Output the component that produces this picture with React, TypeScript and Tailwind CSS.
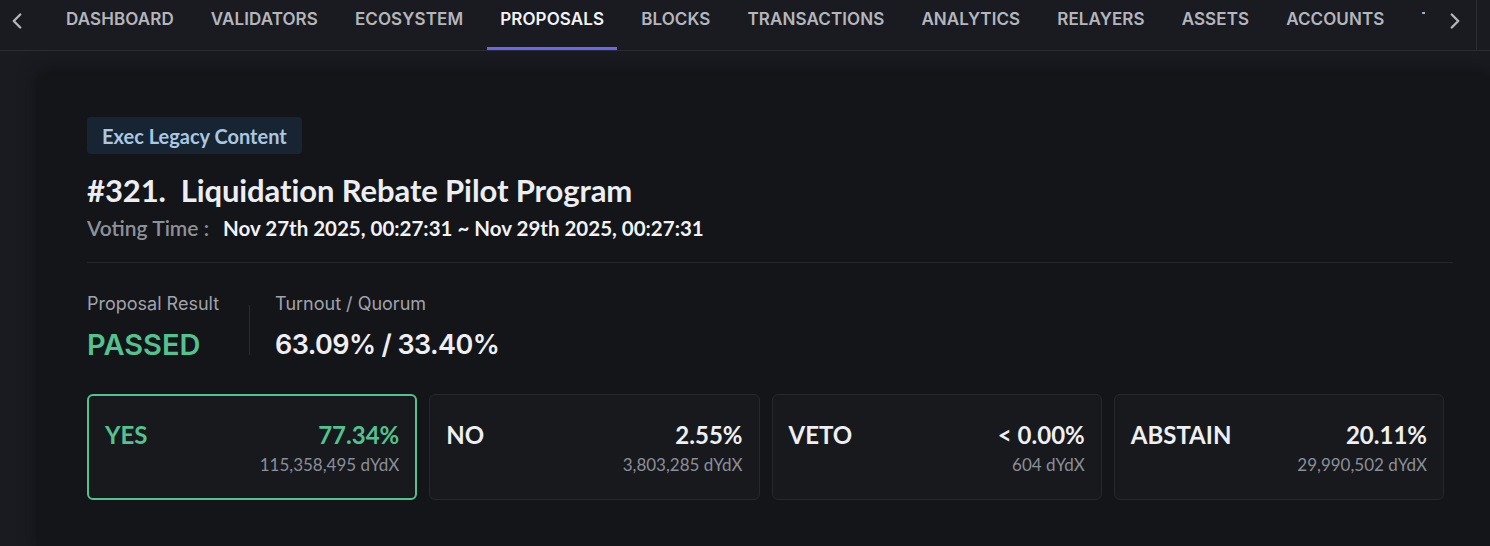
import { ChevronLeft, ChevronRight } from "lucide-react";

const tabs = [
  "DASHBOARD",
  "VALIDATORS",
  "ECOSYSTEM",
  "PROPOSALS",
  "BLOCKS",
  "TRANSACTIONS",
  "ANALYTICS",
  "RELAYERS",
  "ASSETS",
  "ACCOUNTS",
  "TOKENS",
];

const votes = [
  { label: "YES", pct: "77.34%", amount: "115,358,495 dYdX", active: true },
  { label: "NO", pct: "2.55%", amount: "3,803,285 dYdX" },
  { label: "VETO", pct: "< 0.00%", amount: "604 dYdX" },
  { label: "ABSTAIN", pct: "20.11%", amount: "29,990,502 dYdX" },
];

const inter = "font-['Inter',sans-serif]";
const lato = "font-['Lato',sans-serif]";

function TopNav() {
  return (
    <nav className="flex h-[51px] border-b border-[#2c2d33] bg-[#1a1b21]">
      <button className="flex w-[53px] items-start pl-[4px] pt-[8px] text-[#b5b6bc]">
        <ChevronLeft size={26} strokeWidth={2.2} />
      </button>
      <div className="flex w-[1372px] gap-[11px] overflow-hidden">
        {tabs.map((t) => {
          const active = t === "PROPOSALS";
          return (
            <div
              key={t}
              className={`relative flex h-full shrink-0 items-center px-[13px] pb-[10px] text-[17px] font-semibold tracking-[0.1px] ${inter} ${
                active ? "text-[#f3f3f5]" : "text-[#b5b6bc]"
              }`}
            >
              {t}
              {active && (
                <span className="absolute bottom-0 left-0 right-0 h-[3px] bg-[#6b66ef]" />
              )}
            </div>
          );
        })}
      </div>
      <button className="flex w-[51px] items-start justify-center pl-[9px] pt-[8px] text-[#b5b6bc]">
        <ChevronRight size={26} strokeWidth={2.2} />
      </button>
      <div className="flex-1 border-l border-[#2c2d33]" />
    </nav>
  );
}

function VoteCard({
  label,
  pct,
  amount,
  active,
}: {
  label: string;
  pct: string;
  amount: string;
  active?: boolean;
}) {
  return (
    <div
      className={`flex h-[106px] flex-col rounded-[6px] bg-[#18191d] ${lato} ${
        active ? "border-2 border-[#53c28f] px-[16px] pt-[24px]" : "border border-[#26282d] px-[16px] pt-[25px]"
      }`}
    >
      <div
        className={`flex items-center justify-between text-[24px] font-bold leading-[30px] ${
          active ? "text-[#53c28f]" : "text-[#eeeff2]"
        }`}
      >
        <span>{label}</span>
        <span>{pct}</span>
      </div>
      <div className="mt-[4px] text-right text-[17px] leading-[22px] text-[#8a8f99]">{amount}</div>
    </div>
  );
}

export default function App() {
  return (
    <div className="min-h-[546px] bg-[#1a1b21]">
      <TopNav />
      <div className="pl-[36px] pt-[24px]">
        <div className="h-[480px] rounded-tl-[6px] bg-[#141519] pl-[51px] pr-[37px] pt-[42px] shadow-[0_-6px_18px_rgba(0,0,0,0.35)]">
          <div
            className={`inline-flex h-[37px] items-center rounded-[4px] bg-[#172431] px-[15px] text-[20px] font-bold text-[#a9c7e2] ${lato}`}
          >
            Exec Legacy Content
          </div>
          <h1 className={`mt-[18px] whitespace-pre text-[31px] font-bold leading-[36px] tracking-[-0.1px] text-[#eceef1] ${lato}`}>
            #321.  Liquidation Rebate Pilot Program
          </h1>
          <div className={`mt-[6px] flex items-center leading-[28px] ${lato}`}>
            <span className="text-[21px] font-semibold text-[#8d9199]">Voting Time :</span>
            <span className="ml-[14px] text-[20.5px] font-bold text-[#f1f2f4]">
              Nov 27th 2025, 00:27:31 ~ Nov 29th 2025, 00:27:31
            </span>
          </div>
          <div className="mt-[20px] h-px bg-[#25262b]" />
          <div className={`mt-[29px] flex ${inter}`}>
            <div className="pr-[30px]">
              <div className="text-[18px] leading-[24px] text-[#a0a3ab]">Proposal Result</div>
              <div className="mt-[11px] text-[29px] font-semibold leading-[36px] text-[#53c28f]">PASSED</div>
            </div>
            <div className="mt-[13px] h-[50px] w-px bg-[#2a2b30]" />
            <div className="pl-[25px]">
              <div className="text-[18px] leading-[24px] text-[#a0a3ab]">Turnout / Quorum</div>
              <div className="mt-[11px] text-[27px] font-semibold leading-[36px] tracking-[-0.6px] text-[#eeeff2]">
                63.09% / 33.40%
              </div>
            </div>
          </div>
          <div className="mt-[31px] grid w-[1357px] grid-cols-4 gap-[12px]">
            {votes.map((v) => (
              <VoteCard key={v.label} {...v} />
            ))}
          </div>
        </div>
      </div>
    </div>
  );
}
